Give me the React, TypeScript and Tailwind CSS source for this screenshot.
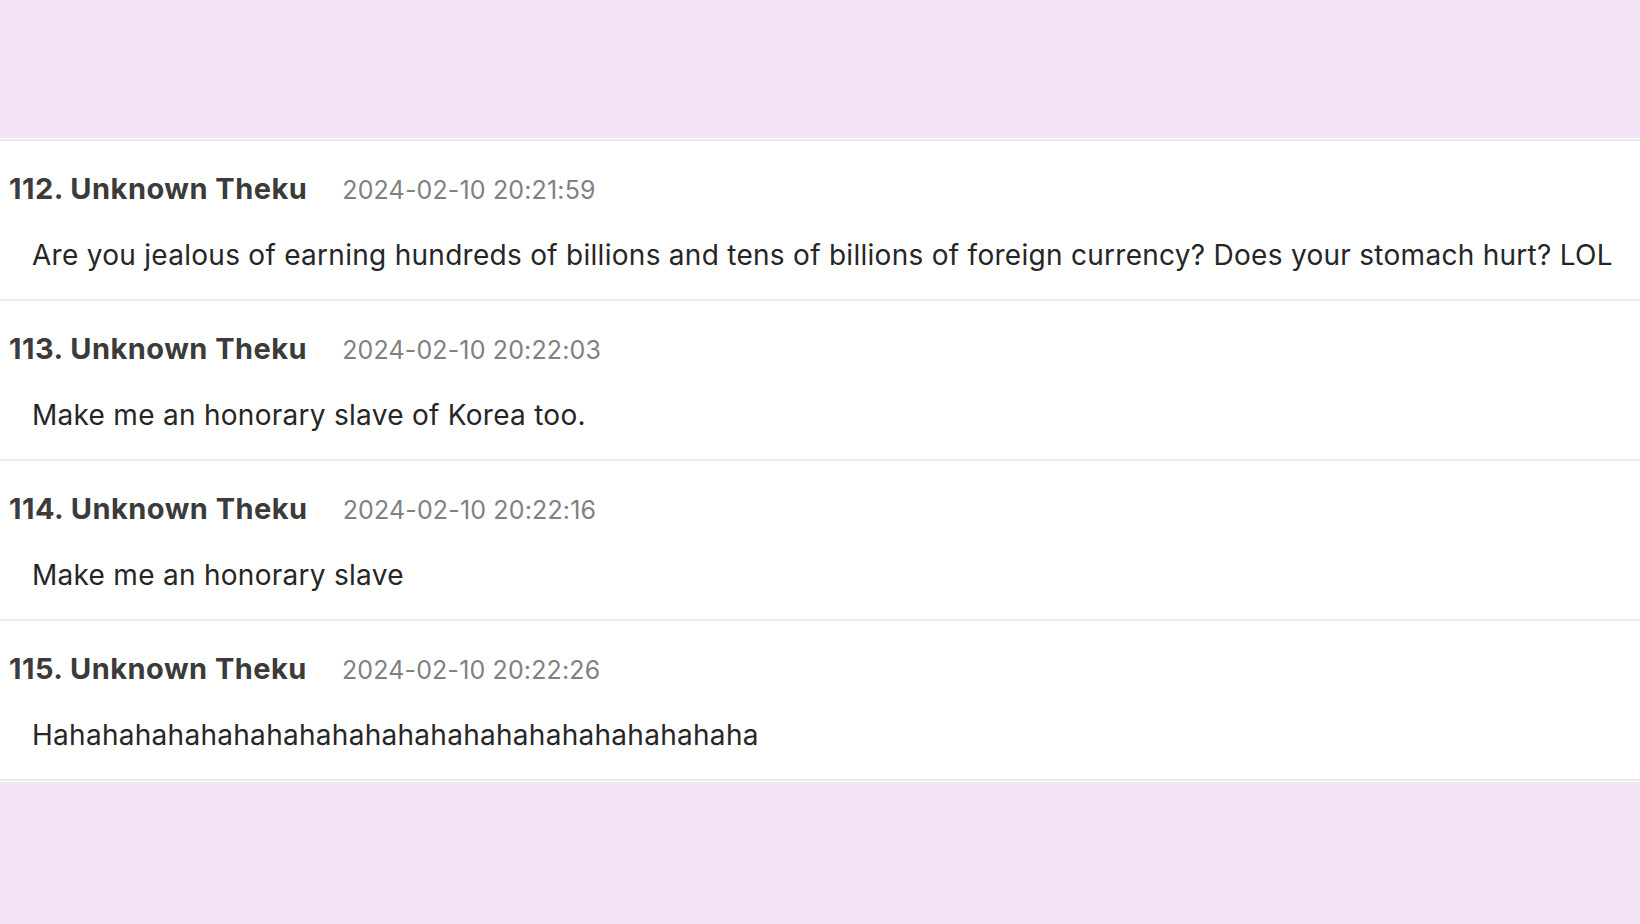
import React from "react";

const comments = [
  { n: 112, name: "Unknown Theku", date: "2024-02-10 20:21:59", body: "Are you jealous of earning hundreds of billions and tens of billions of foreign currency? Does your stomach hurt? LOL" },
  { n: 113, name: "Unknown Theku", date: "2024-02-10 20:22:03", body: "Make me an honorary slave of Korea too." },
  { n: 114, name: "Unknown Theku", date: "2024-02-10 20:22:16", body: "Make me an honorary slave" },
  { n: 115, name: "Unknown Theku", date: "2024-02-10 20:22:26", body: "Hahahahahahahahahahahahahahahahahahahahahaha" },
];

export default function App() {
  return (
    <div className="w-[1640px] h-[924px] overflow-hidden bg-[#f2e3f5] flex flex-col" style={{ fontFamily: "Inter, 'Liberation Sans', sans-serif" }}>
      <div className="h-[138px] shrink-0 bg-[#f2e3f5]" />
      <div className="bg-white py-px">
        {comments.map((c, i) => (
          <div
            key={c.n}
            className={`border-t-2 border-[#ebebeb] h-[160px] pt-[28px] ${i === comments.length - 1 ? "border-b-2 h-[162px]" : ""}`}
          >
            <div className="flex items-baseline h-[40px] leading-[40px] pl-[9px]">
              <span className="text-[29px] font-bold text-[#3b3b3b] tracking-[0.48px]">{c.n}. {c.name}</span>
              <span className="ml-[35px] text-[25px] text-[#818181] tracking-[0.15px]">{c.date}</span>
            </div>
            <div className="mt-[26px] h-[40px] leading-[40px] pl-[32px] text-[28px] text-[#262626] tracking-[0.28px] whitespace-nowrap">
              {c.body}
            </div>
          </div>
        ))}
      </div>
      <div className="flex-1 bg-[#f2e3f5]" />
    </div>
  );
}
